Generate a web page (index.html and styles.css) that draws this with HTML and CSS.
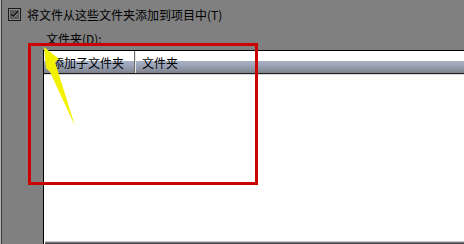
FILE: index.html
```html
<!DOCTYPE html>
<html lang="zh-CN">
<head>
<meta charset="utf-8">
<title>文件夹</title>
<link rel="stylesheet" href="styles.css">
</head>
<body>
<div class="page">
  <div class="check-row">
    <span class="checkbox">
      <svg width="13" height="13" viewBox="0 0 13 13">
        <rect x="0.5" y="0.5" width="12" height="12" fill="#4a4a4a" stroke="#1a1a1a"/>
        <rect x="1.5" y="1.5" width="10" height="10" fill="#5c5c5c" stroke="#8a8a8a"/>
        <path d="M3 6.5 L5.2 9 L10 3.5" fill="none" stroke="#0c0c0c" stroke-width="1.8"/>
        <path d="M3.4 7.6 L5.2 9.8 L10.2 4.6" fill="none" stroke="#cfcfcf" stroke-width="0.7"/>
      </svg>
    </span>
    <span class="check-text">将文件从这些文件夹添加到项目中(T)</span>
  </div>
  <div class="label">文件夹(D):</div>
  <div class="list">
    <div class="header">
      <div class="col col-1">添加子文件夹</div>
      <div class="col col-2">文件夹</div>
    </div>
    <div class="header-shadow"></div>
    <div class="rows"></div>
    <div class="hscroll"></div>
  </div>
</div>
<div class="annot-box"></div>
<svg class="annot-arrow" width="464" height="244" viewBox="0 0 464 244">
  <polygon points="44,47 59,59 55,62 75,126 50,72 46,68" fill="#f2f200"/>
</svg>
</body>
</html>
```

FILE: styles.css
```css
html, body {
  margin: 0;
  padding: 0;
}
body {
  width: 464px;
  height: 244px;
  overflow: hidden;
  position: relative;
  background: #808080;
  font-family: "Noto Sans CJK SC", "Noto Sans", sans-serif;
  font-size: 12px;
  color: #000;
}
.page {
  height: 244px;
  box-sizing: border-box;
  border-left: 1px solid #b4b4b4;
  box-shadow: inset 1px 0 #3a3a3a;
  display: flex;
  flex-direction: column;
}
.check-row {
  display: flex;
  align-items: center;
  gap: 6px;
  padding: 8px 0 0 7px;
  height: 13px;
}
.checkbox {
  width: 13px;
  height: 13px;
  display: block;
}
.checkbox svg {
  display: block;
}
.check-text {
  line-height: 13px;
  white-space: nowrap;
}
.label {
  margin: 11px 0 0 45px;
  height: 13px;
  line-height: 13px;
}
.list {
  margin: 5px 0 0 42px;
  flex: 1;
  border-top: 1px solid #000;
  border-left: 1px solid #000;
  background: #fff;
  display: flex;
  flex-direction: column;
  min-height: 0;
}
.header {
  height: 22px;
  display: flex;
  background: linear-gradient(#ffffff 0, #ffffff 10px, #a6b1c3 10px, #a0aabc 13px, #959eb0 16px, #8a909e 19px, #7f838e 22px);
  border-bottom: 1px solid #1e1e1e;
}
.header-shadow {
  height: 1px;
  background: #d8d8d8;
}
.col {
  display: flex;
  align-items: center;
  white-space: nowrap;
}
.col-1 {
  width: 91px;
  padding-left: 8px;
  box-sizing: border-box;
  border-right: 1px solid #6e6e6e;
  box-shadow: 1px 0 #e6e6e6;
}
.col-2 {
  padding-left: 7px;
}
.rows {
  flex: 1;
}
.hscroll {
  height: 3px;
  margin-left: 1px;
  background: linear-gradient(#c4c8d0 0, #c4c8d0 1px, #8c8e94 1px, #2a2a2a 3px);
}
.annot-box {
  position: absolute;
  left: 28px;
  top: 43px;
  width: 230px;
  height: 142px;
  box-sizing: border-box;
  border: 3px solid #cc0000;
}
.annot-arrow {
  position: absolute;
  left: 0;
  top: 0;
}
```
